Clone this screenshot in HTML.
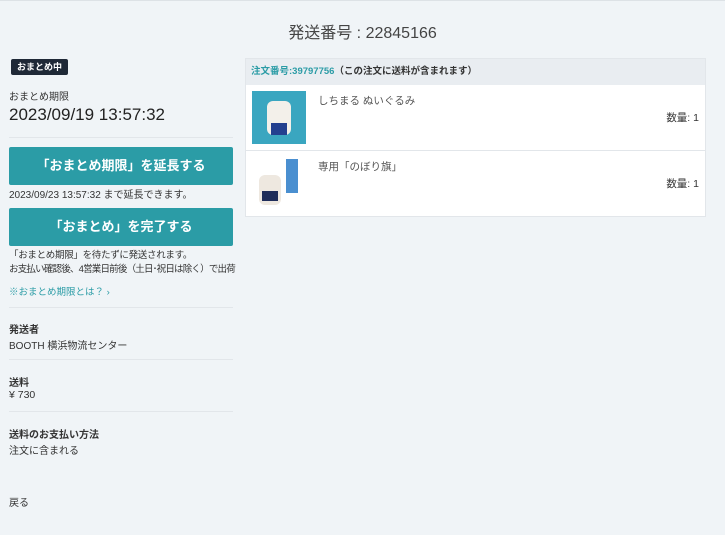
<!DOCTYPE html>
<html><head><meta charset="utf-8"><style>
*{box-sizing:border-box;margin:0;padding:0}
body{width:725px;height:535px;background:#f0f4f7;font-family:"Liberation Sans","Noto Sans CJK JP",sans-serif;color:#333;position:relative;overflow:hidden}
.a{position:absolute;white-space:nowrap}
.btn{position:absolute;left:9px;width:224px;height:38px;background:#2b9ca6;color:#fff;font-size:13px;font-weight:bold;text-align:center;line-height:38px;border-radius:2px}
.hr{position:absolute;left:9px;width:224px;height:1px;background:#e2e6ea}
</style></head><body>
<div style="position:absolute;top:0;left:0;width:725px;height:1px;background:#dde2e6"></div>
<div class="a" style="top:19px;left:0;width:725px;text-align:center;font-size:16px;color:#444">発送番号 : 22845166</div>
<div class="a" style="top:59px;left:11px;background:#1f2937;color:#fff;font-size:9px;font-weight:bold;padding:0 6px;height:16px;line-height:16px;border-radius:2px">おまとめ中</div>
<div class="a" style="top:88px;left:9px;font-size:10px">おまとめ期限</div>
<div class="a" style="top:105px;left:9px;font-size:17px;color:#222">2023/09/19 13:57:32</div>
<div class="hr" style="top:137px"></div>
<div class="btn" style="top:147px">「おまとめ期限」を延長する</div>
<div class="a" style="top:186px;left:9px;font-size:10px">2023/09/23 13:57:32 まで延長できます。</div>
<div class="btn" style="top:208px">「おまとめ」を完了する</div>
<div class="a" style="top:247px;left:9px;font-size:9.5px;letter-spacing:-0.3px">「おまとめ期限」を待たずに発送されます。</div>
<div class="a" style="top:261px;left:9px;font-size:9.5px;letter-spacing:-0.8px">お支払い確認後、4営業日前後（土日･祝日は除く）で出荷</div>
<div class="a" style="top:284px;left:9px;font-size:9.5px;color:#2b9ca6">※おまとめ期限とは？ ›</div>
<div class="hr" style="top:307px"></div>
<div class="a" style="top:321px;left:9px;font-size:10px;font-weight:bold">発送者</div>
<div class="a" style="top:337px;left:9px;font-size:10px">BOOTH 横浜物流センター</div>
<div class="hr" style="top:359px"></div>
<div class="a" style="top:374px;left:9px;font-size:10px;font-weight:bold">送料</div>
<div class="a" style="top:389px;left:9px;font-size:10.5px">¥ 730</div>
<div class="hr" style="top:411px"></div>
<div class="a" style="top:426px;left:9px;font-size:10px;font-weight:bold">送料のお支払い方法</div>
<div class="a" style="top:442px;left:9px;font-size:10px">注文に含まれる</div>
<div class="a" style="top:494px;left:9px;font-size:10px">戻る</div>

<div style="position:absolute;left:245px;top:58px;width:461px;height:159px;background:#fff;border:1px solid #e2e6ea">
<div style="height:26px;background:#e9edf1;font-size:9.5px;font-weight:bold;line-height:26px;padding-left:5px">
<span style="color:#2b9ca6">注文番号:39797756</span>（この注文に送料が含まれます）</div>
<div style="position:relative;height:66px;border-bottom:1px solid #e2e6ea">
<div style="position:absolute;left:6px;top:6px;width:54px;height:53px;background:#3aa6c0">
<div style="position:absolute;left:15px;top:10px;width:24px;height:34px;background:#f3f0ea;border-radius:6px"></div>
<div style="position:absolute;left:19px;top:32px;width:16px;height:12px;background:#23408f"></div></div>
<div class="a" style="left:72px;top:8px;font-size:10.5px;color:#555">しちまる ぬいぐるみ</div>
<div class="a" style="right:6px;top:25px;font-size:10.5px">数量: 1</div>
</div>
<div style="position:relative;height:66px">
<div style="position:absolute;left:40px;top:8px;width:12px;height:34px;background:#4a8fd0"></div>
<div style="position:absolute;left:13px;top:24px;width:22px;height:30px;background:#eee8e0;border-radius:6px"></div>
<div style="position:absolute;left:16px;top:40px;width:16px;height:10px;background:#1f2d5a"></div>
<div class="a" style="left:72px;top:8px;font-size:10.5px;color:#555">専用「のぼり旗」</div>
<div class="a" style="right:6px;top:25px;font-size:10.5px">数量: 1</div>
</div>
</div>
</body></html>
